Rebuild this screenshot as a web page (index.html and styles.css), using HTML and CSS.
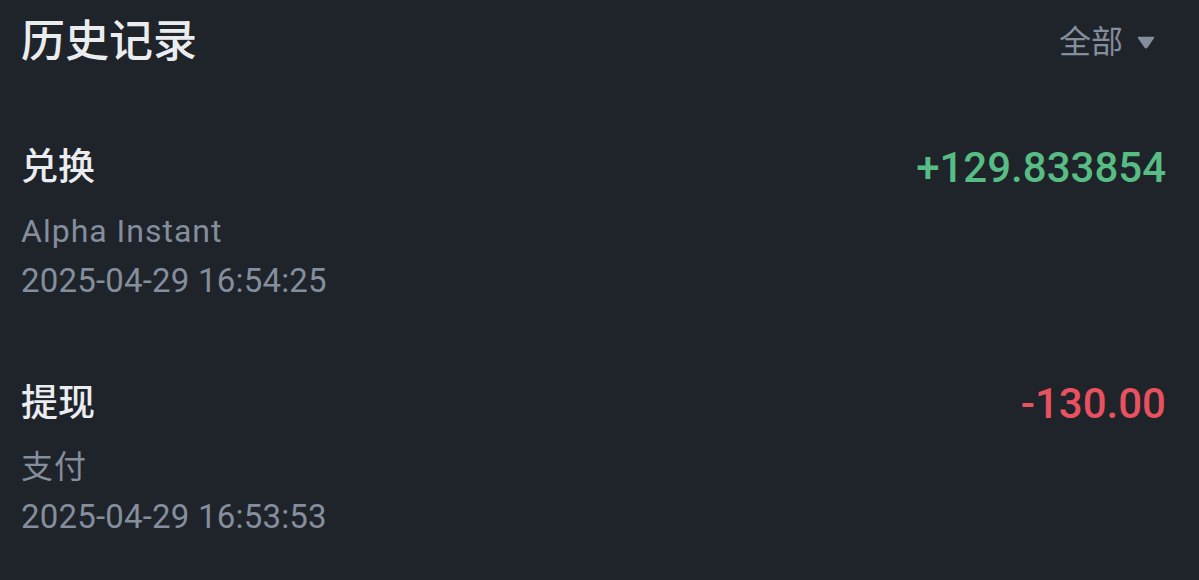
FILE: index.html
```html
<!DOCTYPE html>
<html lang="zh-CN">
<head>
    <meta charset="UTF-8">
    <title>历史记录</title>
    <link rel="stylesheet" href="styles.css">
</head>
<body>
    <div class="page">
        <div class="header">
            <h1 class="title">历史记录</h1>
            <button class="filter">
                全部
                <svg class="caret" width="18" height="13" viewBox="0 0 18 13">
                    <path d="M1.5 1.5 H16.5 L10 11 Q9 12.3 8 11 Z" fill="#848e9c" stroke="#848e9c" stroke-width="1.5" stroke-linejoin="round"/>
                </svg>
            </button>
        </div>

        <ul class="records">
            <li class="record">
                <div class="info">
                    <div class="type">兑换</div>
                    <div class="sub">Alpha Instant</div>
                    <div class="time">2025-04-29 16:54:25</div>
                </div>
                <div class="amount up">+129.833854</div>
            </li>
            <li class="record">
                <div class="info">
                    <div class="type">提现</div>
                    <div class="sub">支付</div>
                    <div class="time">2025-04-29 16:53:53</div>
                </div>
                <div class="amount down">-130.00</div>
            </li>
        </ul>
    </div>
</body>
</html>
```

FILE: styles.css
```css
body {
    margin: 0;
    background-color: #1f232a;
    font-family: Roboto, "Noto Sans CJK SC", sans-serif;
    color: #eaecef;
}

.page {
    padding: 12px 33px 0 21px;
}

.header {
    display: flex;
    justify-content: space-between;
    align-items: center;
    height: 60px;
}

.title {
    margin: 0;
    font-size: 44px;
    font-weight: 500;
    line-height: 60px;
}

.filter {
    display: flex;
    align-items: center;
    gap: 14px;
    margin-right: 11px;
    padding: 0;
    background: none;
    border: none;
    color: #848e9c;
    font-family: inherit;
    font-size: 32px;
    line-height: 60px;
}

.records {
    display: flex;
    flex-direction: column;
    gap: 72px;
    list-style: none;
    margin: 70px 0 0;
    padding: 0;
}

.record {
    display: flex;
    justify-content: space-between;
    align-items: flex-start;
}

.type {
    font-size: 37px;
    font-weight: 500;
    line-height: 52px;
    margin-bottom: 12px;
}

.sub,
.time {
    color: #848e9c;
    font-size: 32px;
    line-height: 50px;
}

.sub {
    letter-spacing: 1px;
}

.time {
    font-size: 33px;
    letter-spacing: 0.2px;
}

.amount {
    font-size: 42px;
    font-weight: 500;
    line-height: 52px;
}

.up {
    color: #58bd84;
}

.down {
    color: #e8515f;
}
```
